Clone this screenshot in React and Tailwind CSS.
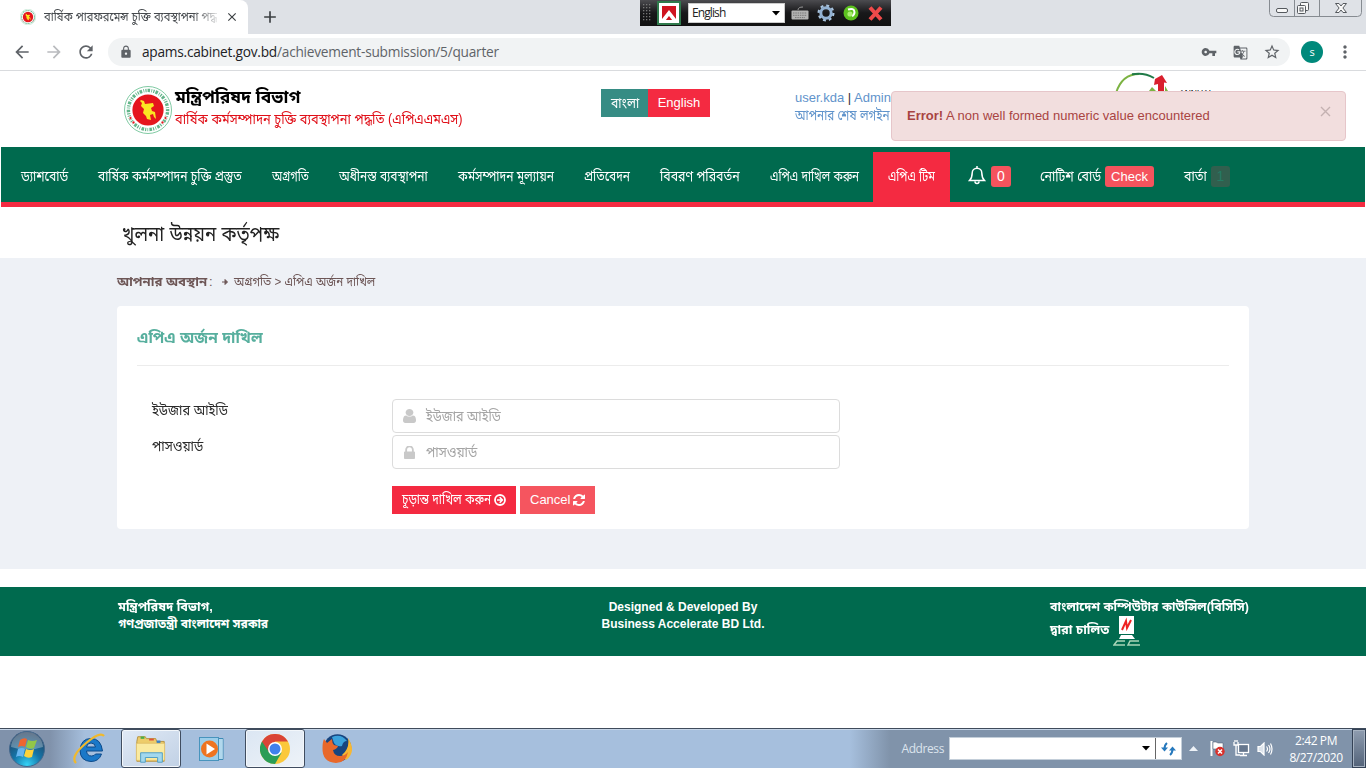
import React, { useLayoutEffect, useRef, useState } from "react";
import { MdArrowBack, MdArrowForward, MdRefresh, MdLock, MdVpnKey, MdGTranslate, MdStarBorder, MdMoreVert, MdAdd, MdClose } from "react-icons/md";

// Bengali label that keeps a fixed advance width regardless of the installed face.
function Bn({ w, className = "", children }) {
  const ref = useRef(null);
  const [k, setK] = useState(1);
  useLayoutEffect(() => {
    const n = ref.current.offsetWidth;
    if (n) setK(w / n);
  }, [w]);
  return (
    <span className={`inline-flex shrink-0 whitespace-nowrap ${className}`} style={{ width: w }}>
      <span ref={ref} className="inline-block shrink-0 origin-left" style={{ transform: `scaleX(${k})` }}>{children}</span>
    </span>
  );
}

function Seal({ size }) {
  return (
    <svg width={size} height={size} viewBox="0 0 48 48" className="shrink-0">
      <circle cx="24" cy="24" r="23.5" fill="#fff" stroke="#5fbd8c" strokeWidth="0.8" />
      <circle cx="24" cy="24" r="19.6" fill="none" stroke="#2f9c63" strokeWidth="3.4" strokeDasharray="1.2 1 2.6 1.3 .8 1.2" opacity=".75" />
      <circle cx="24" cy="24" r="16.4" fill="#fff" />
      <circle cx="24" cy="24" r="15.6" fill="#e5151d" />
      <path d="M17 14l3 1 1 3 8-1 1 3-3 2 1 3 3 1 1 7-2-2-1-3-3 1 1 5-4-1-1-3-3-3 1-4-3-3 1-3-2-2z" fill="#fbe722" />
      <g fill="#e5151d" stroke="#fff" strokeWidth=".6"><circle cx="6.5" cy="32" r="1.4" /><circle cx="9.5" cy="36.500" r="1.4" /><circle cx="41.5" cy="32" r="1.4" /><circle cx="38.5" cy="36.500" r="1.4" /></g>
    </svg>
  );
}

function TabStrip() {
  return (
    <div className="relative flex h-[34px] bg-[#dee1e6]">
      <div className="flex h-[34px] w-[248px] items-center rounded-tr-[8px] bg-white pl-5">
        <Seal size={16} />
        <div className="ml-2 h-[26px] w-[174px] text-[13px] leading-[26px] text-[#45494d] [mask-image:linear-gradient(to_right,black_150px,transparent_178px)]">
          <Bn w={173}>বার্ষিক পারফরমেন্স চুক্তি ব্যবস্থাপনা পদ্ধ</Bn>
        </div>
        <MdClose className="ml-[7px] size-[14px] text-[#3c4043]" />
      </div>
      <div className="flex w-11 items-center justify-center text-[#3c4043]"><MdAdd className="size-[20px]" /></div>
      <div className="absolute left-[640px] top-0 flex h-[26px] w-[251px] items-center bg-linear-to-b from-[#4c4c50] via-[#18181a] to-[#111]">
        <svg width="12" height="20" className="ml-[2px] shrink-0">
          {[1, 4, 7, 10, 13, 16].map((y) => [1, 4, 7].map((x) => <rect key={x + "-" + y} x={x} y={y} width="1.3" height="1.3" fill="#777" />))}
        </svg>
        <svg width="24" height="24" viewBox="0 0 24 24" className="ml-[3px] shrink-0">
          <rect width="24" height="24" fill="#2f7a4c" /><rect x="2" y="2" width="20" height="20" fill="#fff" />
          <rect x="5" y="5" width="14" height="14" fill="#cf1420" />
          <path d="M5 19.500V18l7-9 7 9v1.500h-3.500L12 15l-3.500 4.500z" fill="#fff" />
        </svg>
        <div className="ml-[7px] flex h-[20px] w-[97px] shrink-0 items-center justify-between border border-[#ccc] bg-white pl-[3px] pr-1 font-['Open_Sans'] text-[12px] tracking-[-0.9px] text-[#222]">
          <span>English</span>
          <svg width="8" height="5"><path d="M0 0h8L4 4.5z" fill="#000" /></svg>
        </div>
        <svg width="18" height="14" viewBox="0 0 18 14" className="ml-[6px] shrink-0">
          <path d="M7 4q0-3 5-3" stroke="#999" fill="none" /><rect x="0.5" y="4.5" width="17" height="9" rx="1" fill="#b4b4b4" />
          <path d="M2 7h14M2 9.300h14M4 11.600h10" stroke="#777" strokeDasharray="1.5 .8" />
        </svg>
        <svg width="18" height="18" viewBox="0 0 18 18" className="ml-[8px] shrink-0">
          <circle cx="9" cy="9" r="7.400" fill="none" stroke="#a9c4de" strokeWidth="2.200" strokeDasharray="2.900 2.911" />
          <circle cx="9" cy="9" r="5.200" fill="none" stroke="#92b1d2" strokeWidth="3" />
        </svg>
        <svg width="16" height="16" viewBox="0 0 16 16" className="ml-[8px] shrink-0">
          <circle cx="8" cy="8" r="7.500" fill="#5cc11f" /><path d="M5 4.500q6-2 6.500 2.500 0 3-2.500 4" fill="none" stroke="#fff" strokeWidth="2" /><circle cx="7" cy="9" r="2.600" fill="#a9ee72" />
        </svg>
        <svg width="17" height="17" viewBox="0 0 17 17" className="ml-[8px] shrink-0">
          <path d="M3 2.500l11 12M14 2.500L3 14.500" stroke="#ef4a4a" strokeWidth="4" />
        </svg>
      </div>
      <svg width="96" height="18" viewBox="0 0 96 18" className="absolute left-[1268px] top-0">
        <path d="M1.500 -2V12.500q0 4 4 4H89.500q4 0 4-4V-2" fill="#dfe2e7" stroke="#868b91" />
        <path d="M26.500 0V16M51.500 0V16" stroke="#868b91" />
        <g fill="#f8f8f8" stroke="#55595e">
          <rect x="8.500" y="8.500" width="11" height="4" rx="1.500" />
          <rect x="32.500" y="2.500" width="8" height="8" rx="1" /><rect x="29.500" y="5.500" width="8" height="8" rx="1" /><rect x="32" y="8" width="3" height="3" />
          <path d="M67.500 3.500h3.500l2 2.500 2-2.500h3.500l-3.600 4.500 3.600 4.500h-3.500l-2-2.500-2 2.500h-3.500l3.600-4.500z" />
        </g>
      </svg>
    </div>
  );
}

function Toolbar() {
  return (
    <div className="flex h-[37px] items-center border-b border-[#d9dbde] bg-white text-[#5f6368]">
      <MdArrowBack className="ml-3 size-5" />
      <MdArrowForward className="ml-3 size-5 text-[#b9bbbe]" />
      <MdRefresh className="ml-3 size-5" />
      <div className="ml-3 flex h-7 w-[1182px] items-center rounded-full bg-[#f1f3f4]">
        <MdLock className="ml-[11px] size-[14px]" />
        <span className="ml-[9px] font-['Open_Sans',sans-serif] text-[13.7px] tracking-[-0.24px] text-[#202124]">apams.cabinet.gov.bd<span className="text-[#5f6368]">/achievement-submission/5/quarter</span></span>
        <MdVpnKey className="ml-auto size-4" />
        <MdGTranslate className="ml-4 size-[15px]" />
        <MdStarBorder className="ml-[15px] mr-[9px] size-[18px]" />
      </div>
      <div className="ml-[11px] flex size-[22px] items-center justify-center rounded-full bg-[#00897b] font-['Open_Sans',sans-serif] text-[11px] text-white">s</div>
      <MdMoreVert className="ml-[12px] size-5" />
    </div>
  );
}

function Header() {
  return (
    <header className="relative flex h-[76px] bg-white">
      <div className="ml-[124px] mt-[15px]"><Seal size={48} /></div>
      <div className="ml-[3px] mt-[14px] w-[300px]">
        <div className="flex h-[24px] items-center pt-px text-[17px] font-bold text-black"><Bn w={125}>মন্ত্রিপরিষদ বিভাগ</Bn></div>
        <div className="flex h-[20px] items-center text-[14px] text-[#e00f18]"><Bn w={288}>বার্ষিক কর্মসম্পাদন চুক্তি ব্যবস্থাপনা পদ্ধতি (এপিএএমএস)</Bn></div>
      </div>
      <div className="ml-[126px] mt-[18px] flex h-7 text-[14px] text-white">
        <div className="flex w-[47px] items-center justify-center bg-[#368c84]"><Bn w={28}>বাংলা</Bn></div>
        <div className="flex w-[62px] items-center justify-center bg-[#f42a41] text-[13px]">English</div>
      </div>
      <div className="ml-[85px] mt-[18px] text-[14px] leading-[18px] text-[#5f93cb]">
        <div className="whitespace-nowrap text-[13px]">user.kda <span className="text-[#333]">|</span> Admin</div>
        <div className="-mt-px flex"><Bn w={95}>আপনার শেষ লগইন</Bn></div>
      </div>
      <svg width="120" height="24" viewBox="0 0 120 24" className="absolute left-[1110px] top-0">
        <path d="M6 22Q12 3 29 3" fill="none" stroke="#7cb342" strokeWidth="2" />
        <path d="M22 3.300Q34 1 44 7" fill="none" stroke="#207a48" strokeWidth="2" />
        <path d="M45 8l7-4 5 8-3-.5V22h-6v-9l-4 1z" fill="#d9202d" />
        <path d="M39 20l3-4 4 4zM55 15l3 5h-3z" fill="#7cb342" />
      </svg>
      <div className="absolute left-[1179px] top-[17px] text-[8.5px] leading-[10px] text-black">ANNUAL</div>
      <div className="absolute left-[891px] top-[20px] flex h-[50px] w-[455px] items-center rounded border border-[#e6c6ca] bg-[#f2dede] pl-[15px] text-[13px] text-[#a94442]">
        <span><b>Error!</b> A non well formed numeric value encountered</span>
        <svg width="11" height="11" className="absolute right-[14px] top-[14px]"><path d="M1 1l9 9M10 1l-9 9" stroke="#c4b1b1" strokeWidth="1.4" /></svg>
      </div>
    </header>
  );
}

const links = [
  ["ড্যাশবোর্ড", 47], ["বার্ষিক কর্মসম্পাদন চুক্তি প্রস্তুত", 144], ["অগ্রগতি", 37], ["অধীনস্ত ব্যবস্থাপনা", 89],
  ["কর্মসম্পাদন মূল্যায়ন", 96], ["প্রতিবেদন", 46], ["বিবরণ পরিবর্তন", 79.5], ["এপিএ দাখিল করুন", 88.5],
];

function Nav() {
  return (
    <nav className="mx-px flex h-[60px] border-b-[5px] border-[#f42a41] bg-[#006a4e] pl-[5px] text-[14px] text-white">
      {links.map(([t, w]) => <div key={t} className="flex h-full items-center px-[15px] pt-1"><Bn w={w}>{t}</Bn></div>)}
      <div className="mt-[5px] flex h-[50px] w-[77px] items-center justify-center bg-[#f42a41] pb-px"><Bn w={47}>এপিএ টিম</Bn></div>
      <div className="flex items-center pl-[18px] pt-1">
        <svg width="18" height="20" viewBox="0 0 18 20" fill="none" stroke="#fff" strokeWidth="1.5" className="-mt-1"><path d="M1.500 15.500C4 13 4.200 11 4.200 8a4.800 4.800 0 0 1 9.600 0c0 3 .2 5 2.700 7.500zM9 3V1M7 16.500a2 2 0 0 0 4 0" /></svg>
        <span className="ml-[5px] flex h-[21px] w-5 items-center justify-center rounded-[3px] bg-[#f5535d]">0</span>
      </div>
      <div className="flex items-center pl-[29px] pt-1"><Bn w={61}>নোটিশ বোর্ড</Bn>
        <span className="ml-[4px] flex h-[21px] w-[49px] items-center justify-center rounded-[3px] bg-[#f5535d] text-[13px]">Check</span>
      </div>
      <div className="flex items-center pl-[30px] pt-1"><Bn w={23}>বার্তা</Bn>
        <span className="ml-[4px] flex h-[21px] w-[19px] items-center justify-center rounded-[3px] bg-[#315f4e] text-[#247b64]">1</span>
      </div>
    </nav>
  );
}

function Field({ label, lw, icon }) {
  return (
    <div className="flex h-[34px] w-[448px] items-center rounded border border-[#dcdcdc] bg-white pl-[10px] text-[14px] text-[#a5a5a5]">
      <span className="flex w-[13px] justify-center text-[#c9c9c9]">{icon}</span>
      <span className="ml-[10px] flex"><Bn w={lw}>{label}</Bn></span>
    </div>
  );
}

function Main() {
  return (
    <main>
      <div className="flex h-[51px] items-center bg-white pl-[122px] pt-[2px] text-[21px] text-[#222]"><Bn w={157}>খুলনা উন্নয়ন কর্তৃপক্ষ</Bn></div>
      <div className="flex h-[311px] flex-col bg-[#eef1f6] px-[117px]">
        <div className="flex h-[48px] items-center text-[13px] text-[#6d5656]">
          <Bn w={90} className="font-bold">আপনার অবস্থান</Bn><span className="ml-[2px]">:</span>
          <svg width="6" height="6" className="ml-[9px]"><path d="M0 3h3M3 .5L5.500 3 3 5.500z" fill="#6d5656" stroke="#6d5656" /></svg>
          <Bn w={141} className="ml-[6px]">অগ্রগতি &gt; এপিএ অর্জন দাখিল</Bn>
        </div>
        <section className="h-[223px] rounded bg-white px-[20px]">
          <div className="flex h-[60px] items-center border-b border-[#ececec] pt-[4px] text-[16px] font-bold text-[#57af9e]"><Bn w={126}>এপিএ অর্জন দাখিল</Bn></div>
          <div className="flex pl-[15px] pt-[33px]">
            <div className="flex w-[240px] flex-col pt-px text-[14px] text-[#2b2b2b]">
              <div className="flex h-[36px] items-start"><Bn w={76}>ইউজার আইডি</Bn></div>
              <div className="flex"><Bn w={51}>পাসওয়ার্ড</Bn></div>
            </div>
            <div className="flex flex-col gap-[2px]">
              <Field label="ইউজার আইডি" lw={75} icon={<svg width="13" height="14" viewBox="0 128 1280 1536" preserveAspectRatio="none" fill="currentColor"><path d="M1280 1399q0 109-62.5 187t-150.5 78h-854q-88 0-150.5-78t-62.5-187q0-85 8.500-160.500t31.500-152 58.500-131 94-89 134.500-34.500q131 128 313 128t313-128q76 0 134.500 34.500t94 89 58.500 131 31.500 152 8.500 160.500zm-256-887q0 159-112.500 271.500t-271.500 112.500-271.500-112.500-112.500-271.500 112.500-271.500 271.500-112.500 271.500 112.500 112.500 271.500z" /></svg>} />
              <Field label="পাসওয়ার্ড" lw={51} icon={<svg width="11" height="13" viewBox="0 192 1152 1344" fill="currentColor"><path d="M320 768h512v-192q0-106-75-181t-181-75-181 75-75 181v192zm832 96v576q0 40-28 68t-68 28h-960q-40 0-68-28t-28-68v-576q0-40 28-68t68-28h32v-192q0-184 132-316t316-132 316 132 132 316v192h32q40 0 68 28t28 68z" /></svg>} />
              <div className="mt-[15px] flex gap-[4px] text-[14px] text-white">
                <button className="flex h-7 w-[124px] items-center bg-[#f42a41] pl-[10px] pb-px"><Bn w={89}>চূড়ান্ত দাখিল করুন</Bn>
                  <svg width="12" height="12" viewBox="0 0 12 12" className="ml-[3px]" fill="none" stroke="#fff"><circle cx="6" cy="6" r="5" strokeWidth="1.800" /><path d="M3 6h5M5.700 3.300L8.400 6 5.700 8.700" strokeWidth="1.600" /></svg>
                </button>
                <button className="flex h-7 w-[75px] items-center bg-[#f5555f] pl-[10px] text-[13px]">Cancel
                  <svg width="12" height="12" viewBox="0 128 1536 1536" fill="#fff" className="ml-[3px]"><path d="M1511 1056q0 5-1 7-64 268-268 434.500t-478 166.500q-146 0-282.500-55t-243.500-157l-129 129q-19 19-45 19t-45-19-19-45v-448q0-26 19-45t45-19h448q26 0 45 19t19 45-19 45l-137 137q71 66 161 102t187 36q134 0 250-65t186-179q11-17 53-117 8-23 30-23h192q13 0 22.500 9.500t9.500 22.500zm25-800v448q0 26-19 45t-45 19h-448q-26 0-45-19t-19-45 19-45l138-138q-148-137-349-137-134 0-250 65t-186 179q-11 17-53 117-8 23-30 23h-199q-13 0-22.500-9.500t-9.500-22.500v-7q65-268 270-434.500t480-166.500q146 0 284 55.500t245 156.500l130-129q19-19 45-19t45 19 19 45z" /></svg>
                </button>
              </div>
            </div>
          </div>
        </section>
      </div>
    </main>
  );
}

function Footer() {
  return (
    <footer className="mt-[18px] flex h-[69px] justify-between bg-[#006a4e] pl-[118px] pr-[116px] pt-[12px] text-[12px] font-bold leading-[17px] text-white">
      <div className="flex w-[200px] flex-col"><Bn w={95}>মন্ত্রিপরিষদ বিভাগ,</Bn><Bn w={150}>গণপ্রজাতন্ত্রী বাংলাদেশ সরকার</Bn></div>
      <div className="w-[202px] pr-[2px] text-center">Designed &amp; Developed By<br />Business Accelerate BD Ltd.</div>
      <div className="flex w-[200px] flex-col"><Bn w={199}>বাংলাদেশ কম্পিউটার কাউন্সিল(বিসিসি)</Bn>
        <div className="-mt-px flex items-center"><Bn w={59}>দ্বারা চালিত</Bn>
          <svg width="28" height="31" viewBox="0 0 28 31" className="ml-[4px]">
            <rect x="6" y="1" width="15" height="18" fill="#fff" /><path d="M9 15l4-9 1 7 4-8" fill="none" stroke="#e22" strokeWidth="2" />
            <path d="M8 20h11l3 4H6z" fill="#fff" /><path d="M12 26H4l-3 4h11M26 26h-9l-2 4h12" fill="none" stroke="#a8d5b8" strokeWidth="1.500" />
          </svg>
        </div>
      </div>
    </footer>
  );
}

function Taskbar() {
  return (
    <div className="flex h-10 items-center border-t border-[#3f4b5b] bg-[linear-gradient(90deg,#8092ab_0px,#8092ab_50px,#a6bfdd_85px,#a6bfdd_850px,#8093aa_890px,#8093aa_100%)] font-['Open_Sans',sans-serif] shadow-[inset_0_1px_0_#c7d6e8]">
      <svg width="38" height="38" viewBox="0 0 38 38" className="ml-[8px] shrink-0">
        <defs><radialGradient id="orb" cx=".5" cy=".95" r=".9"><stop offset="0" stopColor="#35d3f6" /><stop offset=".45" stopColor="#1475a8" /><stop offset="1" stopColor="#24405f" /></radialGradient></defs>
        <circle cx="19" cy="19" r="17.500" fill="url(#orb)" stroke="#43678c" /><path d="M3 17a16 15 0 0 1 32 0q-16 5-32 0z" fill="#fff" opacity=".3" />
        <path d="M12 10q4-3 7-1l-2 8q-3-2-7 0z" fill="#ef6530" /><path d="M20 10q4 2 9 0l-3 8q-4 2-8-1z" fill="#93c648" />
        <path d="M10 19q4-2 7 0l-2 8q-4-2-7 0z" fill="#66b5ef" /><path d="M18 19q4 2 8 0l-2 8q-4 2-8-1z" fill="#fcd33b" />
      </svg>
      <svg width="34" height="34" viewBox="0 0 34 34" className="ml-[27px] shrink-0">
        <path d="M29.500 19H13.500q.5 5 5 5 3 0 4-2h6q-2.500 7.500-10.500 7.500Q7 29 7 18 8 6.500 18 6.500T29.500 19zM13.500 15h9q-.5-4-4.500-4t-4.500 4z" fill="#1a78c8" fillRule="evenodd" stroke="#0c4a8a" />
        <path d="M3 31Q-3 25 12 12T31 4" fill="none" stroke="#f0b92d" strokeWidth="2.200" />
      </svg>
      <div className="ml-[14px] flex h-[39px] w-[60px] shrink-0 items-center justify-center rounded-[3px] border border-[#404d60] bg-linear-to-br from-[#e0e9f5] to-[#c1d1e5] shadow-[inset_0_0_0_1px_#f3f7fb]">
        <svg width="34" height="32" viewBox="0 0 36 32">
          <path d="M4 3h8l1 2h10l1 3h8v21H3V8z" fill="#edcc6a" stroke="#b69340" /><path d="M7 4h4" stroke="#4bad46" strokeWidth="2.500" /><path d="M16 6h5" stroke="#e0523a" strokeWidth="2" /><rect x="24" y="7" width="4" height="3" fill="#3b82c4" />
          <path d="M2.500 10h30v18h-30z" fill="#faeaa0" stroke="#d8b55c" strokeWidth=".6" /><path d="M7 30V20h23v10h-5v-5H12v5z" fill="#a2d8ee" stroke="#4c9cc4" />
        </svg>
      </div>
      <svg width="30" height="28" viewBox="0 0 30 28" className="ml-[16px] shrink-0">
        <path d="M12 3.500h14v21H12z" fill="#8fc3e2" stroke="#3d8ab5" /><path d="M23 4v20M25 4v20" stroke="#d4edf8" /><rect x="2.500" y="2.500" width="19" height="23" fill="#9cceea" stroke="#4894bd" />
        <circle cx="12.500" cy="14" r="8.500" fill="#ee7421" /><path d="M9.500 8.500v11L18 14z" fill="#fff" />
      </svg>
      <div className="ml-[18px] flex h-[39px] w-[60px] shrink-0 items-center justify-center rounded-[3px] border border-[#404d60] bg-linear-to-br from-[#dbe6f3] to-[#eef3f8] shadow-[inset_0_0_0_1px_#f3f7fb]">
        <svg width="30" height="30" viewBox="0 0 30 30">
          <circle cx="15" cy="15" r="15" fill="#fbc83c" /><path d="M2 7.500A15 15 0 0 0 15 30l6.500-11.200L15 15z" fill="#2a9d56" />
          <path d="M2 7.500A15 15 0 0 1 28 7.500H15L9 18z" fill="#da4437" /><circle cx="15" cy="15" r="7" fill="#fff" /><circle cx="15" cy="15" r="5.500" fill="#3f80ec" />
        </svg>
      </div>
      <svg width="32" height="32" viewBox="0 0 32 32" className="ml-[16px] shrink-0">
        <circle cx="16.500" cy="15" r="13.800" fill="#17457f" /><path d="M11 4q9-4 15 4-4 0-5 5-5 1-8-3z" fill="#3aa2dc" />
        <path d="M27 5q9 14-2 22l-4-5q8-7 6-17z" fill="#f7b733" />
        <path d="M3 6l3 4 5-4q0 4 2 6l4 1q-1 3-5 4 1 6 7 6 5 0 8-4-2 11-12 11Q1 29 1.500 15 1.500 9 3 6z" fill="#e8682a" />
      </svg>
      <span className="ml-auto text-[12px] tracking-[-0.4px] text-[#dce4ed]">Address</span>
      <div className="ml-[5px] flex h-[23px] w-[233px] border border-[#c3ced9] bg-white">
        <div className="flex flex-1 items-center justify-end pr-[5px]"><svg width="8" height="5"><path d="M0 0h8L4 4.500z" /></svg></div>
        <div className="flex w-[26px] items-center justify-center border-l border-[#666]">
          <svg width="15" height="14" viewBox="0 0 15 14" fill="none" stroke="#2679bd" strokeWidth="2"><path d="M6 1Q3.500 3 3.500 7" /><path d="M9 13q2.500-2 2.500-6" /><path d="M0 5.500h7L3.500 9.500zM8 8.500h7L11.500 4.500z" fill="#2679bd" stroke="none" /></svg>
        </div>
      </div>
      <svg width="9" height="5" className="ml-[7px]"><path d="M0 5l4.500-5L9 5z" fill="#edf2f7" /></svg>
      <svg width="17" height="17" viewBox="0 0 17 17" className="ml-[11px]"><path d="M2.500 1v15" stroke="#fff" strokeWidth="2" /><path d="M4 2h3l2 1h5v7H9L7 9H4z" fill="#fff" stroke="#475569" strokeWidth=".5" /><circle cx="11" cy="11.500" r="4.700" fill="#d9302b" /><path d="M9 9.500l4 4M13 9.500l-4 4" stroke="#fff" strokeWidth="1.500" /></svg>
      <svg width="17" height="17" viewBox="0 0 17 17" className="ml-[7px]" fill="none" stroke="#fff" strokeWidth="1.300"><rect x="5.500" y="4.500" width="10" height="8" fill="#66778e" /><path d="M7 15.500h7M10.500 12.500v3M1 2v3h4V2M2 0v2M4 0v2M3 5v10h4" /></svg>
      <svg width="16" height="14" viewBox="0 0 16 14" className="ml-[7px]" fill="none" stroke="#fff" strokeWidth="1.200"><path d="M1 4.500h2.500L7 1v12L3.500 9.500H1z" fill="#dce3eb" /><path d="M9.500 4.500q2 2.500 0 5M11.500 3q3 4 0 8M13.500 1.500q3 5.500 0 11" /></svg>
      <div className="ml-[15px] w-[56px] whitespace-nowrap text-center text-[12px] leading-[17px] tracking-[-0.4px] text-white">2:42 PM<br />8/27/2020</div>
      <div className="ml-[8px] h-[39px] w-[14px] shrink-0 border border-[#344256] bg-linear-to-b from-[#8f9db0] to-[#536379] shadow-[inset_0_0_0_1px_#a6b2c1]" />
    </div>
  );
}

export default function App() {
  return (
    <div className="flex h-[768px] w-[1366px] flex-col overflow-hidden bg-white font-['Liberation_Sans','Noto_Sans_Bengali',sans-serif]">
      <TabStrip />
      <Toolbar />
      <Header />
      <Nav />
      <Main />
      <Footer />
      <div className="flex-1" />
      <Taskbar />
    </div>
  );
}
